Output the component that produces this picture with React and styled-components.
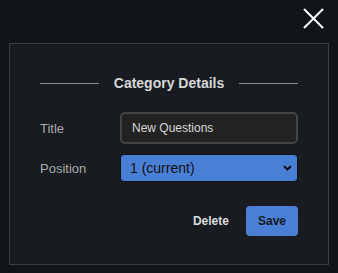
import React from "react";
import styled, { createGlobalStyle } from "styled-components";

const Global = createGlobalStyle`
  html, body { margin: 0; padding: 0; background: #111419; }
  body { font-family: "Liberation Sans", Arial, sans-serif; width: 338px; height: 273px; overflow: hidden; }
`;

const Page = styled.div`
  width: 338px;
  height: 273px;
  box-sizing: border-box;
  padding: 8px 9px 0 9px;
  display: flex;
  flex-direction: column;
`;

const TopBar = styled.div`
  display: flex;
  justify-content: flex-end;
  height: 35px;
`;

const CloseButton = styled.button`
  background: none;
  border: none;
  padding: 0;
  margin-right: 5px;
  width: 21px;
  height: 21px;
  cursor: pointer;
  display: block;
`;

const Panel = styled.div`
  box-sizing: border-box;
  width: 320px;
  height: 222px;
  background: #181b1f;
  border: 1px solid #3a3c3f;
  padding: 31px 30px 0 30px;
  display: flex;
  flex-direction: column;
`;

const Header = styled.div`
  display: flex;
  align-items: center;
  gap: 15px;
  height: 17px;
  margin-bottom: 20px;
`;

const Rule = styled.div`
  flex: 1;
  height: 1px;
  background: #8a8c8f;
`;

const HeaderTitle = styled.div`
  font-size: 14px;
  font-weight: bold;
  color: #d6d8da;
  line-height: 17px;
`;

const Row = styled.div`
  display: grid;
  grid-template-columns: 80px 178px;
  align-items: center;
  margin-bottom: ${(p) => p.$gap}px;
`;

const Label = styled.label`
  font-size: 13px;
  color: #a9abad;
`;

const TextInput = styled.input`
  box-sizing: border-box;
  width: 178px;
  height: 32px;
  background: #222222;
  border: 2px solid #434446;
  border-radius: 5px;
  padding: 0 10px;
  font-family: "Liberation Sans", Arial, sans-serif;
  font-size: 12px;
  color: #d8d8d8;
  outline: none;
`;

const SelectWrap = styled.div`
  position: relative;
  width: 178px;
  height: 28px;
`;

const Select = styled.select`
  appearance: none;
  -webkit-appearance: none;
  box-sizing: border-box;
  width: 178px;
  height: 28px;
  background: #4a7fd6;
  border: 1px solid #0d0f12;
  border-radius: 4px;
  padding: 0 9px;
  font-family: "Liberation Sans", Arial, sans-serif;
  font-size: 14px;
  color: #111;
  outline: none;
`;

const Chevron = styled.svg`
  position: absolute;
  right: 6px;
  top: 11px;
  pointer-events: none;
`;

const Actions = styled.div`
  display: flex;
  justify-content: flex-end;
  align-items: center;
  gap: 5px;
`;

const Button = styled.button`
  box-sizing: border-box;
  height: 30px;
  padding: 0 12px;
  border: none;
  border-radius: 4px;
  font-family: "Liberation Sans", Arial, sans-serif;
  font-size: 12px;
  font-weight: bold;
  background: ${(p) => (p.$primary ? "#4a7fd6" : "transparent")};
  color: ${(p) => (p.$primary ? "#16191d" : "#dadcde")};
  cursor: pointer;
`;

export default function App() {
  return (
    <>
      <Global />
      <Page>
        <TopBar>
          <CloseButton aria-label="Close">
            <svg width="21" height="21" viewBox="0 0 21 21">
              <path d="M1 1 L20 20 M20 1 L1 20" stroke="#ffffff" strokeWidth="2" fill="none" />
            </svg>
          </CloseButton>
        </TopBar>
        <Panel>
          <Header>
            <Rule />
            <HeaderTitle>Category Details</HeaderTitle>
            <Rule />
          </Header>
          <Row $gap={10}>
            <Label>Title</Label>
            <TextInput defaultValue="New Questions" />
          </Row>
          <Row $gap={24}>
            <Label>Position</Label>
            <SelectWrap>
              <Select defaultValue="1">
                <option value="1">1 (current)</option>
              </Select>
              <Chevron width="9" height="6" viewBox="0 0 9 6">
                <path d="M1 1 L4.5 4.5 L8 1" stroke="#111" strokeWidth="2" fill="none" />
              </Chevron>
            </SelectWrap>
          </Row>
          <Actions>
            <Button>Delete</Button>
            <Button $primary>Save</Button>
          </Actions>
        </Panel>
      </Page>
    </>
  );
}
